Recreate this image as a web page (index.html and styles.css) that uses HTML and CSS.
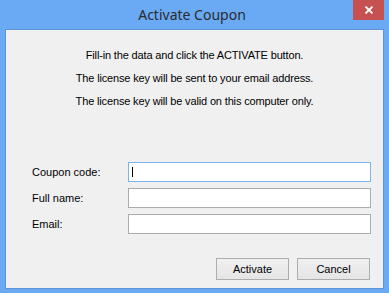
FILE: index.html
```html
<!DOCTYPE html>
<html lang="en">
<head>
    <meta charset="UTF-8">
    <title>Activate Coupon</title>
    <link rel="stylesheet" href="styles.css">
</head>
<body>
    <div class="window">
        <div class="titlebar">
            <span></span>
            <span class="title">Activate Coupon</span>
            <button class="close">
                <svg width="10" height="8" viewBox="0 0 10 8"><path d="M1.5 0.5 L8.5 7.5 M8.5 0.5 L1.5 7.5" stroke="#fff" stroke-width="1.8"/></svg>
            </button>
        </div>
        <div class="client">
            <div class="info">
                <p>Fill-in the data and click the ACTIVATE button.</p>
                <p>The license key will be sent to your email address.</p>
                <p>The license key will be valid on this computer only.</p>
            </div>
            <div class="form">
                <label class="row"><span class="label">Coupon code:</span><span class="field focused"><i class="caret"></i></span></label>
                <label class="row"><span class="label">Full name:</span><span class="field"></span></label>
                <label class="row"><span class="label">Email:</span><span class="field"></span></label>
            </div>
            <div class="buttons">
                <button class="btn">Activate</button>
                <button class="btn">Cancel</button>
            </div>
        </div>
    </div>
</body>
</html>
```

FILE: styles.css
```css
body {
    margin: 0;
    background-color: #6aaaf4;
    font-family: "Liberation Sans", Arial, sans-serif;
    font-size: 11px;
    color: #000000;
}

.window {
    width: 389px;
    height: 293px;
    display: flex;
    flex-direction: column;
}

.titlebar {
    height: 29px;
    display: grid;
    grid-template-columns: 1fr auto 1fr;
    padding-right: 5px;
}
.title {
    font-family: "Noto Sans", "Open Sans", sans-serif;
    font-size: 14px;
    color: #2b2b2b;
    line-height: 30px;
}
.close {
    justify-self: end;
    width: 31px;
    height: 20px;
    border: none;
    padding: 0;
    background-color: #c75050;
    display: flex;
    align-items: center;
    justify-content: center;
}

.client {
    flex: 1;
    margin: 0 5px 4px 5px;
    border: 1px solid #5e93d6;
    background-color: #f0f0f0;
    display: flex;
    flex-direction: column;
}

.info {
    padding-top: 14px;
    text-align: center;
    letter-spacing: -0.15px;
}
.info p {
    margin: 0;
    line-height: 23px;
}

.form {
    margin-top: 49px;
    padding: 0 12px 0 26px;
    display: flex;
    flex-direction: column;
    gap: 6px;
}
.row {
    display: flex;
    align-items: center;
}
.label {
    width: 96px;
}
.field {
    flex: 1;
    height: 18px;
    border: 1px solid #ababab;
    background-color: #ffffff;
    display: flex;
    align-items: center;
}
.field.focused {
    border-color: #7eb4ea;
}
.caret {
    width: 1px;
    height: 10px;
    margin-left: 3px;
    background-color: #000000;
}

.buttons {
    margin-top: 24px;
    padding-right: 13px;
    display: flex;
    justify-content: flex-end;
    gap: 8px;
}
.btn {
    width: 73px;
    height: 22px;
    border: 1px solid #adadad;
    background: linear-gradient(#f0f0f0, #e5e5e5);
    font-family: "Liberation Sans", Arial, sans-serif;
    font-size: 11px;
    color: #000000;
    padding: 0;
}
```
